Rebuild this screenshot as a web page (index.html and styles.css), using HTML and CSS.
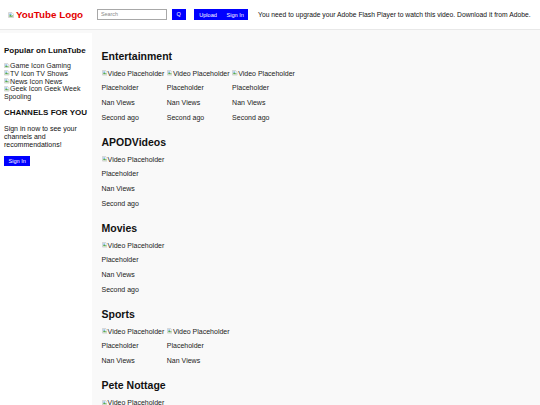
FILE: index.html
```html
<!DOCTYPE html>
<html lang="en">
<head>
<meta charset="utf-8">
<title>LunaTube</title>
<link rel="stylesheet" href="styles.css">
</head>
<body>
<header class="header">
  <div class="logo"><svg class="broken" viewBox="0 0 16 16"><path d="M1.5 1.5h9l4 4v9h-13z" fill="#fff" stroke="#8f8f8f"/><path d="M3.5 4h6v4h-6z" fill="#7ab3e6"/><path d="M3.5 9l3-2 3 3 3-2v4.5h-9z" fill="#5aa84a"/></svg><span>YouTube Logo</span></div>
  <form class="search">
    <input class="search-input" type="text" placeholder="Search">
    <button class="btn btn-search" type="button">Q</button>
  </form>
  <div class="actions">
    <button class="btn btn-upload" type="button">Upload</button>
    <button class="btn btn-signin" type="button">Sign In</button>
  </div>
  <div class="flash">You need to upgrade your Adobe Flash Player to watch this video. Download it from Adobe.</div>
</header>
<div class="layout">
  <aside class="sidebar">
    <h3 class="side-title">Popular on LunaTube</h3>
    <ul class="cat-list">
      <li><svg class="broken" viewBox="0 0 16 16"><path d="M1.5 1.5h9l4 4v9h-13z" fill="#fff" stroke="#8f8f8f"/><path d="M3.5 4h6v4h-6z" fill="#7ab3e6"/><path d="M3.5 9l3-2 3 3 3-2v4.5h-9z" fill="#5aa84a"/></svg>Game Icon Gaming</li>
      <li><svg class="broken" viewBox="0 0 16 16"><path d="M1.5 1.5h9l4 4v9h-13z" fill="#fff" stroke="#8f8f8f"/><path d="M3.5 4h6v4h-6z" fill="#7ab3e6"/><path d="M3.5 9l3-2 3 3 3-2v4.5h-9z" fill="#5aa84a"/></svg>TV Icon TV Shows</li>
      <li><svg class="broken" viewBox="0 0 16 16"><path d="M1.5 1.5h9l4 4v9h-13z" fill="#fff" stroke="#8f8f8f"/><path d="M3.5 4h6v4h-6z" fill="#7ab3e6"/><path d="M3.5 9l3-2 3 3 3-2v4.5h-9z" fill="#5aa84a"/></svg>News Icon News</li>
      <li><svg class="broken" viewBox="0 0 16 16"><path d="M1.5 1.5h9l4 4v9h-13z" fill="#fff" stroke="#8f8f8f"/><path d="M3.5 4h6v4h-6z" fill="#7ab3e6"/><path d="M3.5 9l3-2 3 3 3-2v4.5h-9z" fill="#5aa84a"/></svg>Geek Icon Geek Week Spooling</li>
    </ul>
    <h3 class="side-title channels">CHANNELS FOR YOU</h3>
    <p class="side-text">Sign in now to see your channels and recommendations!</p>
    <button class="btn side-btn" type="button">Sign In</button>
  </aside>
  <main class="main">
    <section class="section">
      <h2 class="section-title">Entertainment</h2>
      <div class="cards">
        <div class="card">
          <div class="card-line"><svg class="broken" viewBox="0 0 16 16"><path d="M1.5 1.5h9l4 4v9h-13z" fill="#fff" stroke="#8f8f8f"/><path d="M3.5 4h6v4h-6z" fill="#7ab3e6"/><path d="M3.5 9l3-2 3 3 3-2v4.5h-9z" fill="#5aa84a"/></svg>Video Placeholder</div>
          <div class="card-line">Placeholder</div>
          <div class="card-line">Nan Views</div>
          <div class="card-line">Second ago</div>
        </div>
        <div class="card">
          <div class="card-line"><svg class="broken" viewBox="0 0 16 16"><path d="M1.5 1.5h9l4 4v9h-13z" fill="#fff" stroke="#8f8f8f"/><path d="M3.5 4h6v4h-6z" fill="#7ab3e6"/><path d="M3.5 9l3-2 3 3 3-2v4.5h-9z" fill="#5aa84a"/></svg>Video Placeholder</div>
          <div class="card-line">Placeholder</div>
          <div class="card-line">Nan Views</div>
          <div class="card-line">Second ago</div>
        </div>
        <div class="card">
          <div class="card-line"><svg class="broken" viewBox="0 0 16 16"><path d="M1.5 1.5h9l4 4v9h-13z" fill="#fff" stroke="#8f8f8f"/><path d="M3.5 4h6v4h-6z" fill="#7ab3e6"/><path d="M3.5 9l3-2 3 3 3-2v4.5h-9z" fill="#5aa84a"/></svg>Video Placeholder</div>
          <div class="card-line">Placeholder</div>
          <div class="card-line">Nan Views</div>
          <div class="card-line">Second ago</div>
        </div>
      </div>
    </section>
    <section class="section">
      <h2 class="section-title">APODVideos</h2>
      <div class="cards">
        <div class="card">
          <div class="card-line"><svg class="broken" viewBox="0 0 16 16"><path d="M1.5 1.5h9l4 4v9h-13z" fill="#fff" stroke="#8f8f8f"/><path d="M3.5 4h6v4h-6z" fill="#7ab3e6"/><path d="M3.5 9l3-2 3 3 3-2v4.5h-9z" fill="#5aa84a"/></svg>Video Placeholder</div>
          <div class="card-line">Placeholder</div>
          <div class="card-line">Nan Views</div>
          <div class="card-line">Second ago</div>
        </div>
      </div>
    </section>
    <section class="section">
      <h2 class="section-title">Movies</h2>
      <div class="cards">
        <div class="card">
          <div class="card-line"><svg class="broken" viewBox="0 0 16 16"><path d="M1.5 1.5h9l4 4v9h-13z" fill="#fff" stroke="#8f8f8f"/><path d="M3.5 4h6v4h-6z" fill="#7ab3e6"/><path d="M3.5 9l3-2 3 3 3-2v4.5h-9z" fill="#5aa84a"/></svg>Video Placeholder</div>
          <div class="card-line">Placeholder</div>
          <div class="card-line">Nan Views</div>
          <div class="card-line">Second ago</div>
        </div>
      </div>
    </section>
    <section class="section">
      <h2 class="section-title">Sports</h2>
      <div class="cards">
        <div class="card">
          <div class="card-line"><svg class="broken" viewBox="0 0 16 16"><path d="M1.5 1.5h9l4 4v9h-13z" fill="#fff" stroke="#8f8f8f"/><path d="M3.5 4h6v4h-6z" fill="#7ab3e6"/><path d="M3.5 9l3-2 3 3 3-2v4.5h-9z" fill="#5aa84a"/></svg>Video Placeholder</div>
          <div class="card-line">Placeholder</div>
          <div class="card-line">Nan Views</div>
        </div>
        <div class="card">
          <div class="card-line"><svg class="broken" viewBox="0 0 16 16"><path d="M1.5 1.5h9l4 4v9h-13z" fill="#fff" stroke="#8f8f8f"/><path d="M3.5 4h6v4h-6z" fill="#7ab3e6"/><path d="M3.5 9l3-2 3 3 3-2v4.5h-9z" fill="#5aa84a"/></svg>Video Placeholder</div>
          <div class="card-line">Placeholder</div>
          <div class="card-line">Nan Views</div>
        </div>
      </div>
    </section>
    <section class="section">
      <h2 class="section-title">Pete Nottage</h2>
      <div class="cards">
        <div class="card">
          <div class="card-line"><svg class="broken" viewBox="0 0 16 16"><path d="M1.5 1.5h9l4 4v9h-13z" fill="#fff" stroke="#8f8f8f"/><path d="M3.5 4h6v4h-6z" fill="#7ab3e6"/><path d="M3.5 9l3-2 3 3 3-2v4.5h-9z" fill="#5aa84a"/></svg>Video Placeholder</div>
        </div>
      </div>
    </section>
  </main>
</div>
</body>
</html>
```
FILE: styles.css
```css
html, body {
  margin: 0;
  padding: 0;
}
body {
  font-family: "Liberation Sans", Arial, sans-serif;
  font-size: 7px;
  color: #111;
  background: #f9f9f9;
  height: 100vh;
  overflow: hidden;
}
.broken {
  width: 5.6px;
  height: 5.6px;
  vertical-align: -0.3px;
  flex-shrink: 0;
  margin-right: 0.5px;
}
.header {
  display: flex;
  align-items: center;
  height: 29px;
  background: #fff;
  border-bottom: 1px solid #e8e8e8;
  padding: 0 8px;
}
.header > * {
  flex-shrink: 0;
}
.logo {
  display: flex;
  align-items: center;
  gap: 1.5px;
  color: #e40000;
  font-weight: bold;
  font-size: 9.8px;
  white-space: nowrap;
}
.logo .broken {
  width: 6px;
  height: 6px;
}
.search {
  display: flex;
  align-items: center;
  margin: 0 0 0 14.3px;
}
.search-input {
  box-sizing: border-box;
  width: 69.4px;
  height: 11.4px;
  border: 1px solid #a8a8a8;
  padding: 0 2.5px;
  font-family: inherit;
  font-size: 5.4px;
  color: #222;
  outline: none;
}
.search-input::placeholder {
  color: #8a8a8a;
}
.btn {
  box-sizing: border-box;
  height: 11px;
  padding: 0;
  border: none;
  background: #0000ff;
  color: #fff;
  font-family: inherit;
  font-size: 5.6px;
  text-align: center;
}
.btn-search {
  width: 14px;
  margin-left: 5px;
}
.actions {
  display: flex;
  gap: 0.6px;
  margin-left: 8.6px;
}
.btn-upload {
  width: 27.4px;
}
.btn-signin {
  width: 25.7px;
}
.flash {
  margin-left: 10px;
  font-size: 6.75px;
  white-space: nowrap;
  color: #111;
}
.layout {
  display: flex;
  box-sizing: border-box;
  padding-top: 3.3px;
  min-height: calc(100vh - 30px);
}
.sidebar {
  box-sizing: border-box;
  width: 92px;
  flex-shrink: 0;
  background: #fff;
  padding: 12.7px 4px;
}
.side-title {
  margin: 0 0 7px;
  font-size: 8px;
  line-height: 9px;
  font-weight: bold;
}
.side-title.channels {
  margin-top: 7.2px;
  margin-bottom: 8px;
}
.cat-list {
  list-style: none;
  margin: 0;
  padding: 0;
  line-height: 7.8px;
  color: #222;
}
.side-text {
  margin: 0 0 7.75px;
  line-height: 7.7px;
}
.side-btn {
  width: 26.3px;
  height: 10px;
}
.main {
  flex: 1;
  padding: 16.7px 9.5px 0;
}
.section + .section {
  margin-top: 10.67px;
}
.section-title {
  margin: 0 0 4.67px;
  font-size: 10.5px;
  line-height: 12px;
  font-weight: bold;
}
.cards {
  display: flex;
}
.card {
  width: 65.3px;
  flex-shrink: 0;
}
.card-line {
  line-height: 14.67px;
  white-space: nowrap;
  color: #222;
}
```
